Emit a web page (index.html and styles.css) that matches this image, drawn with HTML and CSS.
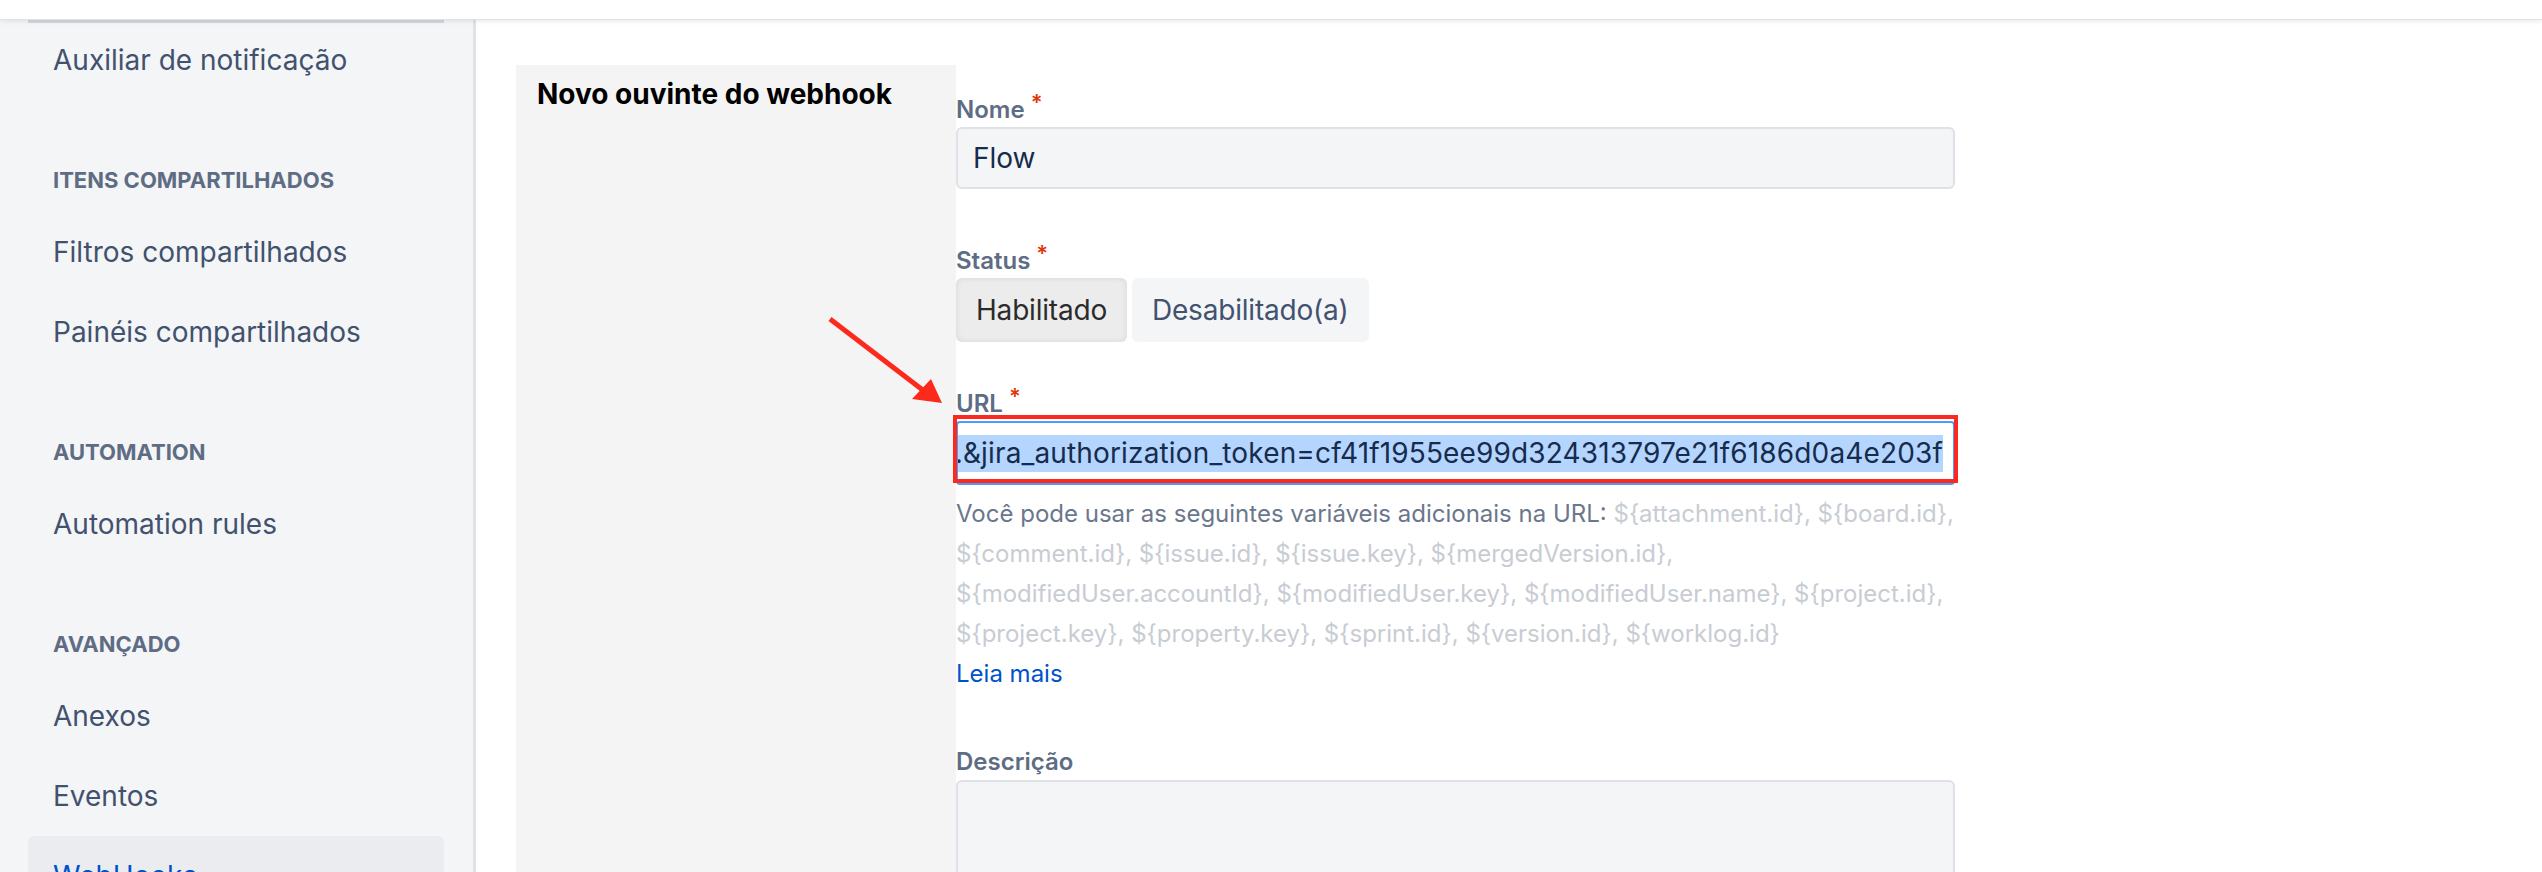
FILE: index.html
```html
<!DOCTYPE html>
<html lang="pt-BR">
<head>
<meta charset="utf-8">
<title>Novo ouvinte do webhook</title>
<link rel="stylesheet" href="styles.css">
</head>
<body>
<header class="topbar"></header>
<div class="layout">
  <aside class="sidebar">
    <div class="sidebar-peek"></div>
    <nav class="nav">
      <a class="nav-item" href="#">Auxiliar de notificação</a>
      <div class="nav-heading">ITENS COMPARTILHADOS</div>
      <a class="nav-item" href="#">Filtros compartilhados</a>
      <a class="nav-item" href="#">Painéis compartilhados</a>
      <div class="nav-heading">AUTOMATION</div>
      <a class="nav-item" href="#">Automation rules</a>
      <div class="nav-heading">AVANÇADO</div>
      <a class="nav-item" href="#">Anexos</a>
      <a class="nav-item" href="#">Eventos</a>
      <a class="nav-item is-selected" href="#">WebHooks</a>
    </nav>
  </aside>
  <main class="main">
    <section class="panel-row">
      <div class="panel-aside">
        <h2 class="panel-title">Novo ouvinte do webhook</h2>
      </div>
      <form class="form">
        <div class="field field-nome">
          <label class="field-label">Nome<span class="req">*</span></label>
          <div class="text-input">Flow</div>
        </div>
        <div class="field field-status">
          <label class="field-label">Status<span class="req">*</span></label>
          <div class="toggle">
            <span class="toggle-btn is-active">Habilitado</span>
            <span class="toggle-btn">Desabilitado(a)</span>
          </div>
        </div>
        <div class="field field-url">
          <label class="field-label">URL<span class="req">*</span></label>
          <div class="url-wrap">
            <div class="url-input"><span class="url-text"><span class="sel">https://api.flow.ai/v1/jira/webhook?src=jira.&amp;jira_authorization_token=cf41f1955ee99d324313797e21f6186d0a4e203f</span></span></div>
          </div>
          <p class="help">Você pode usar as seguintes variáveis adicionais na URL: <span class="vars">${attachment.id}, ${board.id},</span><br><span class="vars">${comment.id}, ${issue.id}, ${issue.key}, ${mergedVersion.id},</span><br><span class="vars">${modifiedUser.accountId}, ${modifiedUser.key}, ${modifiedUser.name}, ${project.id},</span><br><span class="vars">${project.key}, ${property.key}, ${sprint.id}, ${version.id}, ${worklog.id}</span></p>
          <a class="more" href="#">Leia mais</a>
        </div>
        <div class="field field-desc">
          <label class="field-label">Descrição</label>
          <div class="text-area"></div>
        </div>
      </form>
      <svg class="annot-arrow" width="140" height="105" viewBox="0 0 140 105" aria-hidden="true">
        <line x1="14" y1="9" x2="108" y2="81" stroke="#fc2a1c" stroke-width="5" stroke-linecap="butt"/>
        <polygon points="126,93 96,89 115,69" fill="#fc2a1c"/>
      </svg>
    </section>
  </main>
</div>
</body>
</html>
```
FILE: styles.css
```css
* { box-sizing: border-box; }
html, body { margin: 0; padding: 0; }
body {
  width: 2542px;
  height: 872px;
  overflow: hidden;
  background: #ffffff;
  color: #172b4d;
  font-family: Inter, "Liberation Sans", Arial, sans-serif;
}

.topbar {
  height: 20px;
  background: #ffffff;
  border-bottom: 1px solid #dfe1e6;
  box-shadow: 0 1px 5px rgba(9, 30, 66, 0.10);
  position: relative;
  z-index: 2;
}

.layout {
  display: flex;
  height: 852px;
}

/* Sidebar */
.sidebar {
  width: 476px;
  flex: none;
  background: #f4f5f7;
  border-right: 3px solid #e0e2e7;
}
.sidebar-peek {
  height: 3px;
  margin: 0 29px -3px 28px;
  background: #d3d6dc;
}
.nav {
  display: flex;
  flex-direction: column;
}
.nav-item {
  height: 80px;
  display: flex;
  align-items: center;
  margin: 0 29px 0 28px;
  padding-left: 25px;
  font-size: 28px;
  color: #42526e;
  text-decoration: none;
  border-radius: 6px;
}
.nav-item.is-selected {
  background: #ebecf0;
  color: #0052cc;
}
.nav-heading {
  margin: 64px 0 16px;
  padding-left: 53px;
  height: 32px;
  line-height: 32px;
  font-size: 22px;
  font-weight: 700;
  color: #5e6c84;
}

/* Main */
.main {
  flex: 1;
  padding: 45px 0 0 40px;
}
.panel-row {
  display: flex;
  position: relative;
  min-height: 830px;
}
.panel-aside {
  width: 440px;
  flex: none;
  background: #f4f4f4;
  padding: 9px 21px 0;
}
.panel-title {
  margin: 0;
  font-size: 28px;
  line-height: 40px;
  font-weight: 700;
  color: #000000;
}

.form {
  width: 999px;
  padding-top: 29px;
}
.field-label {
  display: block;
  height: 32px;
  font-size: 24px;
  line-height: 32px;
  font-weight: 600;
  color: #5e6c84;
}
.req {
  color: #de350b;
  font-size: 22px;
  margin-left: 6px;
  vertical-align: 8px;
  line-height: 0;
}

.text-input {
  margin-top: 1px;
  height: 62px;
  border: 2px solid #dfe1e6;
  border-radius: 6px;
  background: #f4f5f7;
  padding: 0 15px;
  display: flex;
  align-items: center;
  font-size: 28px;
  color: #172b4d;
}

.field-status { margin-top: 56px; }
.toggle {
  display: flex;
  gap: 5px;
  margin-top: 1px;
}
.toggle-btn {
  height: 64px;
  padding: 0 20px;
  display: flex;
  align-items: center;
  font-size: 28px;
  letter-spacing: -0.2px;
  border-radius: 6px;
  background: #f4f5f7;
  color: #42526e;
}
.toggle-btn.is-active {
  background: #ececec;
  color: #2b2b2b;
  box-shadow: inset 0 0 6px rgba(0, 0, 0, 0.09);
}

.field-url { margin-top: 46px; }
.url-wrap {
  position: relative;
  margin-top: 1px;
}
.url-wrap::after {
  content: "";
  position: absolute;
  left: -3px;
  right: -3px;
  top: -6px;
  bottom: 2px;
  border: 4px solid #fc2a1c;
  pointer-events: none;
}
.url-input {
  height: 64px;
  border: 2px solid #4c9aff;
  border-radius: 4px;
  background: #ffffff;
  display: flex;
  justify-content: flex-end;
  align-items: center;
  padding: 0 10px 0 5px;
  overflow: hidden;
  white-space: nowrap;
  font-size: 28px;
  letter-spacing: 0.15px;
  color: #172b4d;
}
.url-text { flex: none; }
.sel {
  display: inline-block;
  background: #b4d5fe;
  line-height: 37px;
}

.help {
  margin: 9px 0 0;
  font-size: 24px;
  line-height: 40px;
  color: #6b778c;
  white-space: nowrap;
}
.vars { color: #c8ccd3; }
.more {
  display: block;
  font-size: 24px;
  line-height: 40px;
  color: #0052cc;
  text-decoration: none;
}

.field-desc { margin-top: 52px; }
.text-area {
  margin-top: 2px;
  height: 200px;
  border: 2px solid #dfe1e6;
  border-radius: 6px;
  background: #f4f5f7;
}

.annot-arrow {
  position: absolute;
  left: 300px;
  top: 245px;
}
```
